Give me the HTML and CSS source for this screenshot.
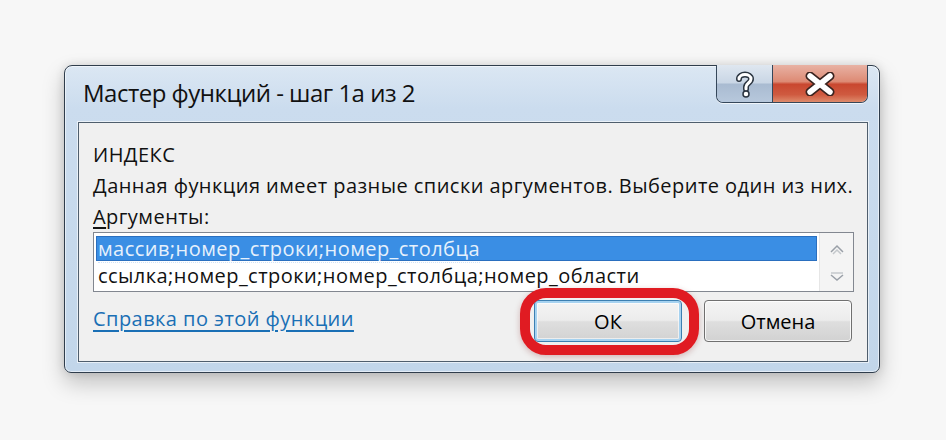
FILE: index.html
```html
<!DOCTYPE html>
<html lang="ru">
<head>
<meta charset="utf-8">
<title>Мастер функций</title>
<link rel="stylesheet" href="styles.css">
</head>
<body>
<div class="page">
  <div class="window">
    <div class="titlebar">
      <div class="title">Мастер функций - шаг 1а из 2</div>
      <div class="caption-buttons">
        <div class="cbtn help">
          <svg width="22" height="28" viewBox="0 0 22 28"><path d="M5 9 C5 3 17 3 17 9 C17 13 12 13 12 17 L12 19" fill="none" stroke="#2a3440" stroke-width="6" stroke-linecap="round"/><path d="M5 9 C5 3 17 3 17 9 C17 13 12 13 12 17 L12 19" fill="none" stroke="#fff" stroke-width="3" stroke-linecap="round"/><circle cx="12" cy="24" r="3" fill="#fff" stroke="#2a3440" stroke-width="1.5"/></svg>
        </div>
        <div class="cbtn close">
          <svg width="36" height="24" viewBox="0 0 36 24"><path d="M8 4 L28 20 M28 4 L8 20" stroke="#3a2420" stroke-width="9" stroke-linecap="round"/><path d="M8 4 L28 20 M28 4 L8 20" stroke="#fff" stroke-width="5.5" stroke-linecap="round"/></svg>
        </div>
      </div>
    </div>
    <div class="panel">
      <div class="line">ИНДЕКС</div>
      <div class="line">Данная функция имеет разные списки аргументов. Выберите один из них.</div>
      <div class="line"><span class="ul">А</span>ргументы:</div>
      <div class="listbox">
        <div class="items">
          <div class="item selected"><span class="focus">массив;номер_строки;номер_столбца</span></div>
          <div class="item">ссылка;номер_строки;номер_столбца;номер_области</div>
        </div>
        <div class="scrollbar">
          <svg width="16" height="12" viewBox="0 0 16 12"><path d="M2 8 L8 2 L14 8" fill="none" stroke="#9aa0a8" stroke-width="1.5"/><path d="M4 10 L8 6 L12 10" fill="none" stroke="#c4c8cc" stroke-width="1.5"/></svg>
          <svg width="16" height="12" viewBox="0 0 16 12"><path d="M2 3 L14 3" stroke="#c4c8cc" stroke-width="1.5"/><path d="M2 5 L8 10 L14 5" fill="none" stroke="#9aa0a8" stroke-width="1.5"/></svg>
        </div>
      </div>
      <div class="footer">
        <a class="link" href="#">Справка по этой функции</a>
        <div class="buttons">
          <div class="ok-wrap">
            <div class="btn default">ОК</div>
            <div class="ring"></div>
          </div>
          <div class="btn">Отмена</div>
        </div>
      </div>
    </div>
  </div>
</div>
</body>
</html>
```
FILE: styles.css
```css
* { box-sizing: border-box; }
html, body { margin: 0; padding: 0; }
body {
  width: 946px;
  height: 440px;
  background: #f7f7f7;
  font-family: "Open Sans", "Noto Sans", sans-serif;
  color: #111;
  overflow: hidden;
}
.page {
  padding: 65px 0 0 64px;
}
.window {
  width: 816px;
  height: 308px;
  border: 1px solid #2f3d4c;
  border-radius: 8px 8px 7px 7px;
  background: linear-gradient(180deg, #dbe7f3 0%, #cbdcee 14%, #c6d9ec 60%, #c2d6ea 100%);
  box-shadow: inset 0 0 0 1px rgba(255,255,255,0.55), 0 10px 22px rgba(0,0,0,0.22), 0 0 10px rgba(0,0,0,0.12);
  display: flex;
  flex-direction: column;
}
.titlebar {
  height: 56px;
  display: flex;
  justify-content: space-between;
  align-items: flex-start;
  padding-right: 11px;
}
.title {
  font-size: 24px;
  line-height: 54px;
  padding-left: 18px;
  color: #111;
  letter-spacing: -0.5px;
}
.caption-buttons {
  display: flex;
  height: 38px;
  margin-top: -1px;
  border: 1px solid #35475a;
  border-top: none;
  border-radius: 0 0 7px 7px;
  overflow: hidden;
  box-shadow: 0 1px 0 rgba(255,255,255,0.7);
}
.cbtn {
  display: flex;
  align-items: center;
  justify-content: center;
}
.cbtn.help {
  width: 56px;
  background: linear-gradient(180deg, #dfe7f0 0%, #c9d6e5 48%, #a9bbd1 52%, #b7c8dc 100%);
  border-right: 1px solid #35475a;
}
.cbtn.close {
  width: 94px;
  background: linear-gradient(180deg, #e8b2a4 0%, #dd8a74 45%, #c9472f 52%, #cf5a40 80%, #de8b6c 100%);
}
.panel {
  margin: 0 11px 0 13px;
  height: 240px;
  background: #f0f0f0;
  border: 1px solid #4f5e6d;
  box-shadow: 0 0 0 1px rgba(255,255,255,0.6);
  padding: 16px 13px 0 14px;
  font-size: 20px;
  letter-spacing: 0.45px;
}
.line {
  line-height: 31px;
  height: 31px;
  white-space: nowrap;
}
.ul { text-decoration: underline; text-underline-offset: 3px; }
.listbox {
  height: 60px;
  border: 1px solid #828790;
  background: #fff;
  display: flex;
}
.items {
  flex: 1;
  padding: 3px 2px 0 2px;
}
.item {
  height: 25px;
  line-height: 25px;
  padding-left: 2px;
  white-space: nowrap;
}
.item.selected {
  background: #3a8ee4;
  border: 1px solid #2a6fbf;
  color: #e6f1fc;
  line-height: 23px;
  padding-left: 1px;
}
.focus {
  border-bottom: 1px dotted #cfe2f7;
}
.item + .item { margin-top: 2px; }
.scrollbar {
  width: 34px;
  border-left: 1px solid #e6e6e6;
  background: #f4f4f4;
  display: flex;
  flex-direction: column;
  align-items: center;
  justify-content: space-between;
  padding: 11px 0 9px;
}
.footer {
  display: flex;
  justify-content: space-between;
  align-items: center;
  margin-top: 8px;
  padding-right: 2px;
}
.link {
  color: #1a6fb5;
  text-decoration: underline;
  text-underline-offset: 4px;
  margin-top: -6px;
}
.buttons {
  display: flex;
  gap: 22px;
  letter-spacing: 0;
}
.ok-wrap { position: relative; }
.btn {
  width: 148px;
  height: 42px;
  border: 1px solid #707070;
  border-radius: 4px;
  background: linear-gradient(180deg, #f4f4f4 0%, #ececec 48%, #dedede 52%, #d2d2d2 100%);
  box-shadow: inset 0 0 0 1px rgba(255,255,255,0.8);
  display: flex;
  align-items: center;
  justify-content: center;
  color: #000;
}
.btn.default {
  border-color: #3c7fb1;
  box-shadow: inset 0 0 0 2px #a6d2f0, inset 0 0 0 3px rgba(255,255,255,0.6);
}
.ring {
  position: absolute;
  left: -14px;
  right: -17px;
  top: -12px;
  bottom: -13px;
  border: 10px solid #e01b22;
  border-radius: 26px;
  box-shadow: 0 2px 6px rgba(120,0,0,0.25);
}
```
